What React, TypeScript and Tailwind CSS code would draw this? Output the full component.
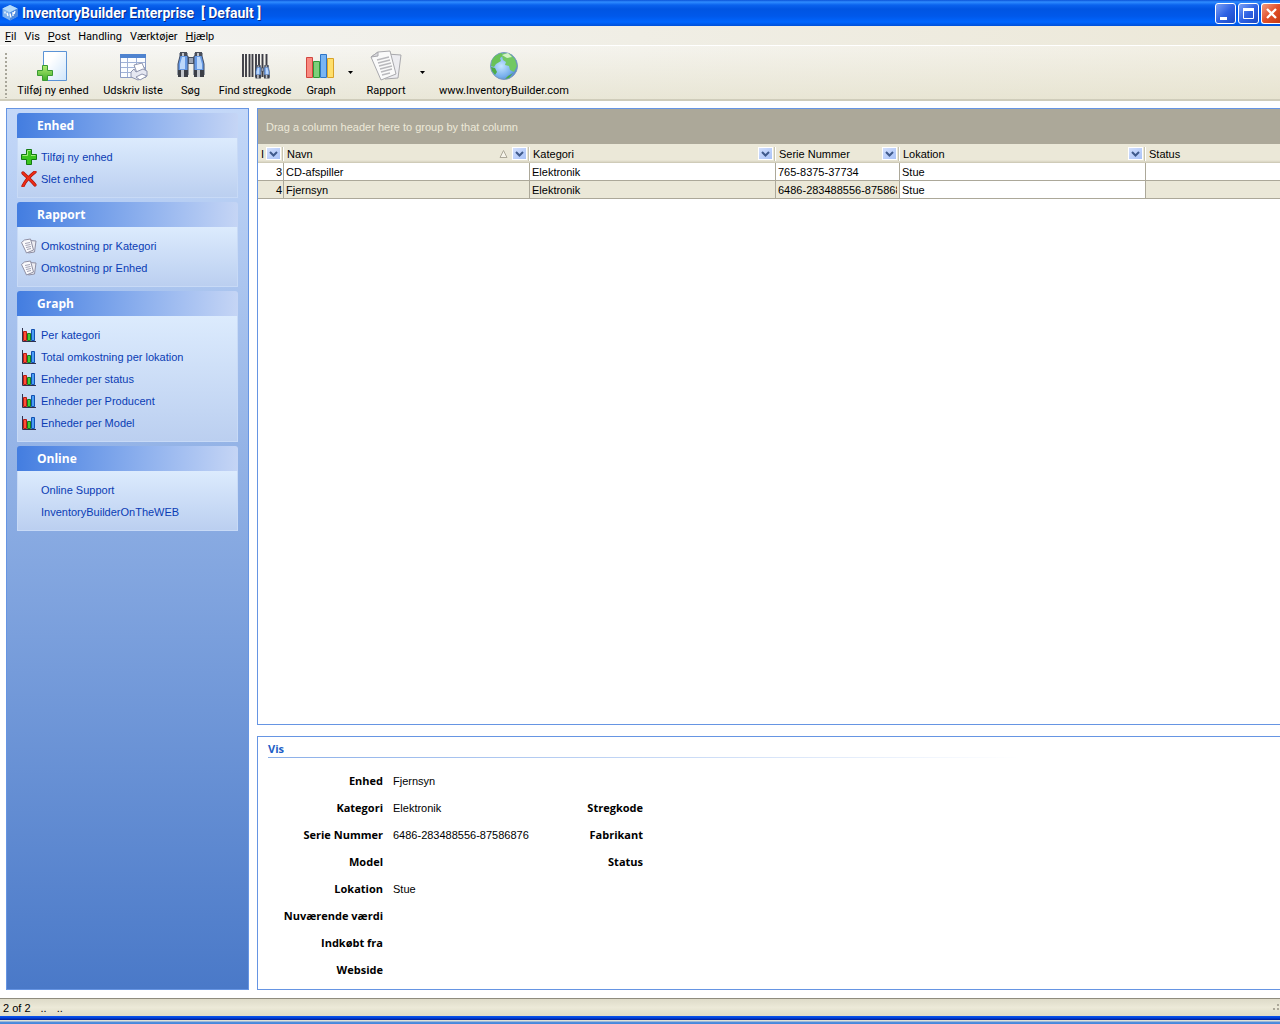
import type { ReactNode } from "react";

const menuItems = [
  { key: "F", rest: "il" },
  { key: "", rest: "Vis" },
  { key: "P", rest: "ost" },
  { key: "", rest: "Handling" },
  { key: "", rest: "Værktøjer" },
  { key: "H", rest: "jælp" },
];

function AppLogo() {
  return (
    <svg className="size-4" viewBox="0 0 16 16" aria-hidden="true">
      <path d="M8 0 15.5 3.5v8L8 15.5.5 11.5v-8z" fill="#7fb2ee" />
      <path d="M8 0 15.5 3.5 8 7.5.5 3.5z" fill="#b5dbfb" />
      <path d="M8 7.5 15.5 3.5v8L8 15.5z" fill="#4f8ade" />
      <path d="M3 6.500v2M5 8l1 3M8 8.500l1 4M11 7v4M13 6l-1 3" stroke="#fff" strokeWidth="1.300" fill="none" />
    </svg>
  );
}

function NewUnitIcon() {
  return (
    <svg className="h-8 w-8" viewBox="0 0 32 32" aria-hidden="true">
      <defs>
        <linearGradient id="sheet" x1="0" y1="0" x2="1" y2="1">
          <stop offset="0.3" stopColor="#fff" />
          <stop offset="1" stopColor="#cfe5fb" />
        </linearGradient>
        <linearGradient id="plusFill" x1="0" y1="0" x2="0" y2="1">
          <stop offset="0" stopColor="#b4ec74" />
          <stop offset="1" stopColor="#3fae2a" />
        </linearGradient>
      </defs>
      <path d="M6.500 1.500h23v29h-23z" fill="url(#sheet)" stroke="#5b93d6" />
      <path d="M5.500 15.500h5v5h5v5h-5v5h-5v-5h-5v-5h5z" fill="url(#plusFill)" stroke="#3a9a34" />
    </svg>
  );
}

function PrintListIcon() {
  return (
    <svg className="h-8 w-8" viewBox="0 0 32 32" aria-hidden="true">
      <path d="M3.500 4.500h25v23h-25z" fill="#fbfdff" stroke="#8b9cc4" />
      <path d="M3 4h26v4H3z" fill="#4f83cf" />
      <path d="M4 12.500h24M4 17.500h24M4 22.500h24M10.500 8v19M19.500 8v19" stroke="#9fb1d6" fill="none" />
      <path d="m17 15 8-2 3 7-8 3z" fill="#fff" stroke="#8f95ae" />
      <path d="m14 22 3-3 2 3 7-3 4 2v5l-9 4-7-3z" fill="#e6e8f2" stroke="#8f95ae" />
      <path d="m19 27 6-3 5 2-7 4z" fill="#fff" stroke="#8f95ae" />
    </svg>
  );
}

function BinocularShapes() {
  return (
    <>
      <path d="M12 7h8v7h-8z" fill="#4a5260" />
      <path d="M14 8h4v5h-4z" fill="#9aa3b3" />
      <path d="M5 3h7v3h1v19H3V14L5 6zM20 3h7v3l2 8v11H19V6h1z" fill="#6699e4" stroke="#3f4c66" />
      <path d="M7 7h3v12H5v-5zM22 7h3l2 7v5h-5z" fill="#bcd8fb" />
      <path d="M5 2h7v4H5zM20 2h7v4h-7z" fill="#4a4f5a" />
      <path d="M3 20h10v7H3zM19 20h10v7H19z" fill="#3c3f47" />
      <path d="M6 20h3v7H6zM22 20h3v7h-3zM7 3h2v3H7zM22 3h2v3h-2z" fill="#c2c6cc" />
    </>
  );
}

function SearchIcon() {
  return (
    <svg className="h-8 w-8" viewBox="0 0 32 32" aria-hidden="true">
      <BinocularShapes />
    </svg>
  );
}

function BarcodeIcon() {
  return (
    <svg className="h-8 w-8" viewBox="0 0 32 32" aria-hidden="true">
      <path d="M4 4v23M7 4v23M10.500 4v23M13.500 4v23M17 4v23M20 4v23M23.500 4v23M27.500 4v23" stroke="#3d3d45" strokeWidth="1.900" />
      <svg x="16" y="14" width="15" height="16" viewBox="2 1 28 28">
        <BinocularShapes />
      </svg>
    </svg>
  );
}

function GraphIcon() {
  return (
    <svg className="h-8 w-8" viewBox="0 0 32 32" aria-hidden="true">
      <path d="M1.500 7.500h6v20h-6z" fill="#f98a80" stroke="#d2453f" />
      <path d="M8.500 11.500h6v16h-6z" fill="#7ed07a" stroke="#2f9a3a" />
      <path d="M15.500 4.500h6v23h-6z" fill="#79b5f3" stroke="#2f76c8" />
      <path d="M22.500 8.500h6v19h-6z" fill="#ffdf6b" stroke="#d8a22a" />
    </svg>
  );
}

function ReportIcon() {
  return (
    <svg className="h-8 w-8" viewBox="0 0 32 32" aria-hidden="true">
      <path d="m17 4 14 1-3 23-13 1z" fill="#ececf0" stroke="#a9a9ad" />
      <path d="m1 7 7-5 12-1 6 23-15 6z" fill="#fafafa" stroke="#a9a9ad" />
      <path d="m1 7 7-1V2z" fill="#d9d9dd" stroke="#a9a9ad" />
      <path d="m7 10 12-3M8 13l12-3M9 16l12-3M10 19l12-3M11 22l11-3M12 25l8-2" stroke="#b9b9bd" strokeWidth="1.400" fill="none" />
    </svg>
  );
}

function GlobeIcon() {
  return (
    <svg className="h-8 w-8" viewBox="0 0 32 32" aria-hidden="true">
      <defs>
        <radialGradient id="sea" cx="0.4" cy="0.5" r="0.65">
          <stop offset="0" stopColor="#c4e5ff" />
          <stop offset="0.600" stopColor="#78b0ec" />
          <stop offset="1" stopColor="#4676c4" />
        </radialGradient>
      </defs>
      <circle cx="16" cy="16" r="13.500" fill="url(#sea)" stroke="#7c98bd" />
      <path d="m4 10 3-4 6-3 3 2-4 3 1 3-5 3-2 3-3-1z" fill="#69c257" />
      <path d="m15 3 7 1 5 5 2 7-3 6-4-2-1-4-4-1 1-3-3-2-1-4z" fill="#72c862" />
      <path d="m3 17 4 1 2 4-2 3-3-4zM20 26l5-3-4 5-4 1z" fill="#4dab46" />
      <path d="m14 5 6-2 4 4-5 1z" fill="#d3f2c4" />
    </svg>
  );
}

function AddIcon() {
  return (
    <svg className="size-4" viewBox="0 0 16 16" aria-hidden="true">
      <path d="M5.500.5h5v5h5v5h-5v5h-5v-5h-5v-5h5z" fill="#3cc51e" stroke="#157a12" />
      <path d="M6.500 1.500h3M6.500 2v4.500H1.500M10 6.500h4.500" stroke="#a5ee7c" fill="none" />
    </svg>
  );
}

function DeleteIcon() {
  return (
    <svg className="size-4" viewBox="0 0 16 16" aria-hidden="true">
      <path d="M2 2c3 3 8 7 12 12M14 1C10 4 5 9 2 15" stroke="#a81208" strokeWidth="3.200" strokeLinecap="round" fill="none" />
      <path d="M2 2c3 3 8 7 12 12M14 1C10 4 5 9 2 15" stroke="#ee2d16" strokeWidth="1.900" strokeLinecap="round" fill="none" />
    </svg>
  );
}

function SmallPagesIcon() {
  return (
    <svg className="size-4" viewBox="0 0 16 16" aria-hidden="true">
      <path d="m9 2.500 6 .5-1.500 11-6 1z" fill="#ededf2" stroke="#8f8fa3" />
      <path d="m.5 4.500 3-2.500 6-1 3 11-7 3z" fill="#fafafc" stroke="#8f8fa3" />
      <path d="m4 5.500 5-1M4.500 7.500l5-1M5 9.500l5-1M6 11.500l4-1" stroke="#a3a3b6" fill="none" />
    </svg>
  );
}

function SmallGraphIcon() {
  return (
    <svg className="size-4" viewBox="0 0 16 16" aria-hidden="true">
      <path d="M1.500 1v13.500H15" stroke="#30304c" fill="none" />
      <path d="M2.500 4.500h3v9h-3z" fill="#ff5038" stroke="#b81c14" />
      <path d="M6.500 6.500h3v7h-3z" fill="#47cc32" stroke="#14801a" />
      <path d="M10.500 2.500h3v11h-3z" fill="#4aa0f4" stroke="#1250b0" />
    </svg>
  );
}

const sidebarGroups: { title: string; items: { label: string; icon?: ReactNode }[] }[] = [
  {
    title: "Enhed",
    items: [
      { label: "Tilføj ny enhed", icon: <AddIcon /> },
      { label: "Slet enhed", icon: <DeleteIcon /> },
    ],
  },
  {
    title: "Rapport",
    items: [
      { label: "Omkostning pr Kategori", icon: <SmallPagesIcon /> },
      { label: "Omkostning pr Enhed", icon: <SmallPagesIcon /> },
    ],
  },
  {
    title: "Graph",
    items: [
      { label: "Per kategori", icon: <SmallGraphIcon /> },
      { label: "Total omkostning per lokation", icon: <SmallGraphIcon /> },
      { label: "Enheder per status", icon: <SmallGraphIcon /> },
      { label: "Enheder per Producent", icon: <SmallGraphIcon /> },
      { label: "Enheder per Model", icon: <SmallGraphIcon /> },
    ],
  },
  {
    title: "Online",
    items: [{ label: "Online Support" }, { label: "InventoryBuilderOnTheWEB" }],
  },
];

const columns = [
  { label: "I", width: "w-[26px]", filter: true },
  { label: "Navn", width: "w-[246px]", filter: true, sorted: true },
  { label: "Kategori", width: "w-[246px]", filter: true },
  { label: "Serie Nummer", width: "w-[124px]", filter: true },
  { label: "Lokation", width: "w-[246px]", filter: true },
  { label: "Status", width: "" },
];

const rows = [
  { id: 3, cells: ["CD-afspiller", "Elektronik", "765-8375-37734", "Stue", ""] },
  { id: 4, cells: ["Fjernsyn", "Elektronik", "6486-283488556-87586876", "Stue", ""] },
];

const leftDetails = [
  ["Enhed", "Fjernsyn"],
  ["Kategori", "Elektronik"],
  ["Serie Nummer", "6486-283488556-87586876"],
  ["Model", ""],
  ["Lokation", "Stue"],
  ["Nuværende værdi", ""],
  ["Indkøbt fra", ""],
  ["Webside", ""],
];

const rightDetails = [
  ["Stregkode", ""],
  ["Fabrikant", ""],
  ["Status", ""],
];

function TitleBar() {
  const button =
    "flex h-[21px] w-[21px] items-center justify-center rounded-[3px] border border-white bg-linear-to-br from-[#7c9ff4] via-[#2f62e4] to-[#1c49c4]";

  return (
    <header className="flex h-[26px] shrink-0 items-center bg-[linear-gradient(#0a52d8_0,#2f8cff_2px,#0a63ee_5px,#0055e2_9px,#0058ea_16px,#0066ff_22px,#0050d8_26px)] pl-0.5">
      <AppLogo />
      <h1 className="flex-1 pl-1 font-[Roboto,sans-serif] text-[14px] leading-[18px] font-bold whitespace-pre text-white [text-shadow:1px_1px_#0a2a86]">
        InventoryBuilder Enterprise  [ Default ]
      </h1>
      <div className="flex gap-0.5">
        <button className={button} aria-label="Minimize">
          <svg className="size-[15px]" viewBox="0 0 15 15">
            <path d="M2 11h7v3H2z" fill="#fff" />
          </svg>
        </button>
        <button className={button} aria-label="Maximize">
          <svg className="size-[15px]" viewBox="0 0 15 15">
            <path d="M2.500 2v10.500h10V2" stroke="#fff" fill="none" />
            <path d="M2 2h11v3H2z" fill="#fff" />
          </svg>
        </button>
        <button
          className="flex h-[21px] w-[19px] items-center justify-center rounded-l-[3px] border border-r-0 border-white bg-linear-to-br from-[#f09a80] via-[#e2502a] to-[#c63a12]"
          aria-label="Close"
        >
          <svg className="size-[15px]" viewBox="0 0 15 15">
            <path d="m3 3 9 9M12 3l-9 9" stroke="#fff" strokeWidth="2.300" />
          </svg>
        </button>
      </div>
    </header>
  );
}

function ToolButton({ label, icon, className }: { label: string; icon: ReactNode; className: string }) {
  return (
    <button className={`flex flex-col items-center whitespace-nowrap ${className}`}>
      {icon}
      <span className="leading-[18px]">{label}</span>
    </button>
  );
}

function DropArrow({ label }: { label: string }) {
  return (
    <button className="flex h-11 w-3 items-center justify-center" aria-label={label}>
      <svg className="h-[3px] w-[5px]" viewBox="0 0 5 3">
        <path d="M0 0h5L2.500 3z" fill="#000" />
      </svg>
    </button>
  );
}

function Toolbar() {
  return (
    <div className="flex h-[55px] shrink-0 items-start border-b-2 border-[#cfccba] bg-linear-to-b from-white/30 to-[#e4e1cc]/60 pt-[4px]">
      <div className="mt-[2px] ml-1 h-[46px] w-[5px] bg-[radial-gradient(circle,#a8a69a_1px,transparent_1px)] bg-size-[4px_4px]" />
      <ToolButton className="w-[88px]" label="Tilføj ny enhed" icon={<NewUnitIcon />} />
      <ToolButton className="w-[72px]" label="Udskriv liste" icon={<PrintListIcon />} />
      <ToolButton className="w-[43px]" label="Søg" icon={<SearchIcon />} />
      <ToolButton className="w-[86px]" label="Find stregkode" icon={<BarcodeIcon />} />
      <ToolButton className="w-[46px]" label="Graph" icon={<GraphIcon />} />
      <DropArrow label="Graph menu" />
      <ToolButton className="w-[60px]" label="Rapport" icon={<ReportIcon />} />
      <DropArrow label="Rapport menu" />
      <ToolButton className="w-[152px]" label="www.InventoryBuilder.com" icon={<GlobeIcon />} />
    </div>
  );
}

function Sidebar() {
  return (
    <nav className="flex w-[243px] shrink-0 flex-col gap-1 border border-[#6695e3] bg-linear-to-b from-[#c4d8f8] to-[#4a79c8] px-2.5 pt-1">
      {sidebarGroups.map((group) => (
        <section key={group.title}>
          <h2 className="h-[25px] rounded-t-[3px] bg-linear-to-r from-[#437de0] to-[#c5d5f5] pl-5 font-['Open_Sans',sans-serif] text-[12px] leading-[25px] font-bold text-white">
            {group.title}
          </h2>
          <ul className="border border-t-0 border-[#c8daf6] bg-linear-to-b from-[#dcebfd] to-[#bbcff0] pt-2 pb-[7px]">
            {group.items.map((item) => (
              <li key={item.label} className="flex h-[22px] items-center pl-[3px]">
                <span className="w-5">{item.icon}</span>
                <a href="#" className="text-[#0a3cb4]">
                  {item.label}
                </a>
              </li>
            ))}
          </ul>
        </section>
      ))}
    </nav>
  );
}

function FilterButton({ label }: { label: string }) {
  return (
    <button
      className="flex h-[13px] w-[15px] shrink-0 items-center justify-center border border-white bg-linear-to-br from-[#d3e0fd] to-[#a9c2f8]"
      aria-label={`Filter ${label}`}
    >
      <svg className="h-[6px] w-[9px]" viewBox="0 0 9 6">
        <path d="m1 1 3.500 3.500L8 1" stroke="#3f5a8c" strokeWidth="2" fill="none" />
      </svg>
    </button>
  );
}

function UnitGrid() {
  return (
    <section className="flex-1 overflow-hidden border border-r-0 border-[#6695e3] bg-white">
      <p className="h-[35px] bg-[#aca899] pl-2 leading-9 text-[#ece9d8]">
        Drag a column header here to group by that column
      </p>
      <table className="w-full table-fixed border-collapse">
        <thead>
          <tr className="h-[19px] bg-[linear-gradient(#ebe8d8_0,#ebe8d8_16px,#d8d4c2_18px,#c6c2ae_19px)]">
            {columns.map((column) => (
              <th key={column.label} className={`p-0 text-left font-normal ${column.width}`}>
                <div className="flex h-[19px] items-center">
                  <span className="flex-1 pl-[3px] whitespace-nowrap">{column.label}</span>
                  {column.sorted && (
                    <svg className="mr-1 h-[8px] w-[9px]" viewBox="0 0 9 8" aria-hidden="true">
                      <path d="M1 7.500h7L4.500.5z" stroke="#aca899" fill="#f6f4ea" />
                    </svg>
                  )}
                  {column.filter && (
                    <div className="flex shrink-0 items-center gap-px">
                      <FilterButton label={column.label} />
                      <span className="h-[14px] w-[2px] border-r border-white bg-[#c8c5b2]" />
                    </div>
                  )}
                </div>
              </th>
            ))}
          </tr>
        </thead>
        <tbody>
          {rows.map((row, i) => (
            <tr key={row.id} className={`h-[18px] ${i === 1 ? "bg-[#ebe8d8]" : "bg-white"}`}>
              <td className="p-0">
                <div className="h-[18px] border-r border-b border-[#aca899] pr-px text-right leading-[18px]">{row.id}</div>
              </td>
              {row.cells.map((cell, c) => (
                <td key={c} className={`p-0 ${c === 3 ? "bg-white" : ""}`}>
                  <div className={`h-[18px] border-b border-[#aca899] px-0.5 leading-[18px] ${c < 4 ? "border-r" : ""}`}>
                    <span className="block overflow-hidden whitespace-nowrap">{cell}</span>
                  </div>
                </td>
              ))}
            </tr>
          ))}
        </tbody>
      </table>
    </section>
  );
}

function DetailList({ items, className }: { items: string[][]; className: string }) {
  return (
    <dl className={className}>
      {items.map(([label, value]) => (
        <div key={label} className="flex h-[27px] items-center gap-2.5 whitespace-nowrap">
          <dt className="w-[115px] shrink-0 text-right font-['Open_Sans',sans-serif] font-bold">{label}</dt>
          <dd>{value}</dd>
        </div>
      ))}
    </dl>
  );
}

function DetailPanel() {
  return (
    <section className="shrink-0 border border-r-0 border-[#6695e3] bg-white px-2.5 pb-[6px]">
      <h2 className="h-5 font-['Open_Sans',sans-serif] leading-6 font-bold text-[#215dc6]">Vis</h2>
      <div className="h-px bg-linear-to-r from-[#8aaee8] to-white to-75%" />
      <div className="flex pt-[9px]">
        <DetailList className="w-[260px]" items={leftDetails} />
        <DetailList className="pt-[27px]" items={rightDetails} />
      </div>
    </section>
  );
}

function StatusBar() {
  return (
    <footer className="shrink-0">
      <div className="flex h-[18px] items-center justify-between border-t border-[#8f8c7e] bg-linear-to-b from-[#dedbc9] via-[#ece9d8] to-[#e0dcc8] pl-[3px]">
        <div className="flex gap-2.5">
          <span>2 of 2</span>
          <span>..</span>
          <span>..</span>
        </div>
        <svg className="size-2.5" viewBox="0 0 10 10" aria-hidden="true">
          <path d="M7 1h2v2H7zM3 5h2v2H3zM7 5h2v2H7z" fill="#aca899" />
        </svg>
      </div>
      <div className="h-2 bg-[linear-gradient(#0a54ee_0,#0040d8_2px,#001890_4px,#e0e2d6_4px,#e0e2d6_5px,#5a8ed8_6px,#3c88e0_8px)]" />
    </footer>
  );
}

export default function App() {
  return (
    <div className="flex h-screen flex-col overflow-hidden bg-white font-['Liberation_Sans',Arial,sans-serif] text-[11px] leading-4 text-black">
      <TitleBar />
      <div className="shrink-0 bg-linear-to-r from-[#f4f4f2] to-[#ece8d8] font-[Roboto,sans-serif]">
        <div role="menubar" className="flex h-5 items-end border-b border-white pl-px">
          {menuItems.map((item) => (
            <button key={item.rest} role="menuitem" className="px-1">
              {item.key && <u>{item.key}</u>}
              {item.rest}
            </button>
          ))}
        </div>
        <Toolbar />
      </div>
      <main className="flex min-h-0 flex-1 gap-2 pt-[7px] pb-2 pl-1.5">
        <Sidebar />
        <div className="flex min-w-0 flex-1 flex-col gap-[11px]">
          <UnitGrid />
          <DetailPanel />
        </div>
      </main>
      <StatusBar />
    </div>
  );
}
